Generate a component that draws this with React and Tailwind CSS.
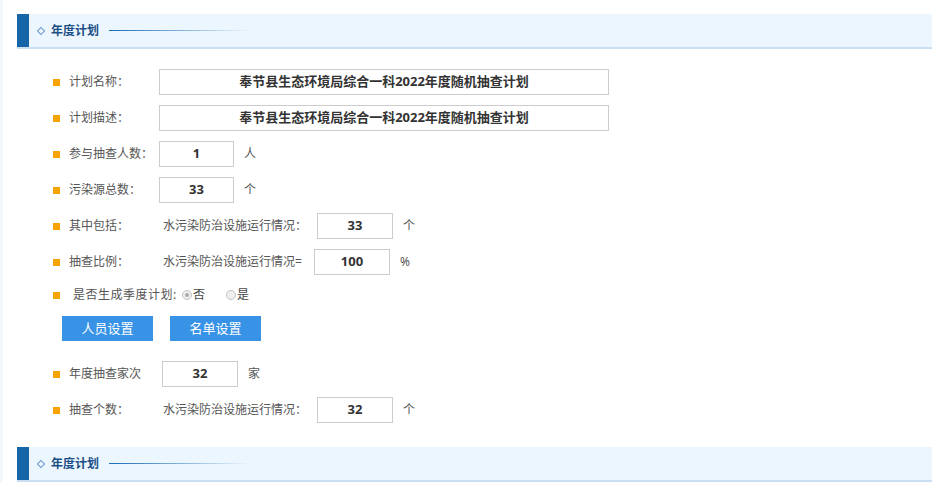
import React from 'react';

const font = { fontFamily: '"Noto Sans", "Noto Sans CJK SC", sans-serif' };

const SectionHeader = () => (
  <div className="flex h-[35px] bg-[#ebf6fe] border-b-2 border-[#cadff2]">
    <div className="w-[12px] bg-[#1565a8]" />
    <div className="flex items-center pl-[9px]">
      <span className="w-[6px] h-[6px] rotate-45 border border-[#6d9ccc] mr-[7px]" />
      <span className="text-[12px] font-bold text-[#1b4f86]">年度计划</span>
      <span className="ml-[10px] w-[140px] h-px bg-gradient-to-r from-[#1a6bb3] to-transparent" />
    </div>
  </div>
);

const Bullet = () => <span className="w-[7px] h-[7px] bg-[#f7a300] mr-[9px] shrink-0" />;

const Box = ({ w, children }) => (
  <div className={`${w} h-[26px] border border-[#cccccc] flex items-center justify-center text-[13px] font-bold text-[#333]`}>
    {children}
  </div>
);

const Row = ({ label, labelW = 'w-[90px]', children, h = 'h-[36px]' }) => (
  <div className={`flex items-center ${h}`}>
    <Bullet />
    <span className={`${labelW} text-[12px] text-[#555] whitespace-nowrap`}>{label}</span>
    {children}
  </div>
);

const Unit = ({ children }) => <span className="ml-[10px] text-[12px] text-[#555]">{children}</span>;

const Sub = ({ children, w = 'w-[154px]' }) => (
  <span className={`${w} text-[12px] text-[#555] whitespace-nowrap`}>{children}</span>
);

const Radio = ({ checked, label }) => (
  <span className="flex items-center">
    <span className="w-[10px] h-[10px] rounded-full border border-[#c4c4c4] bg-[#efefef] flex items-center justify-center">
      {checked && <span className="w-[4px] h-[4px] rounded-full bg-[#a9a9a9]" />}
    </span>
    <span className="ml-px text-[12px] text-[#444]">{label}</span>
  </span>
);

export default function App() {
  return (
    <div className="w-[937px] h-[483px] bg-white flex overflow-hidden" style={font}>
      <div className="w-[3px] bg-[#f2f8fe]" />
      <div className="w-[929px] pl-[14px] pt-[14px]">
        <SectionHeader />

        <div className="pl-[36px] pt-[15px]">
          <Row label="计划名称：">
            <Box w="w-[450px]">奉节县生态环境局综合一科2022年度随机抽查计划</Box>
          </Row>
          <Row label="计划描述：">
            <Box w="w-[450px]">奉节县生态环境局综合一科2022年度随机抽查计划</Box>
          </Row>
          <Row label="参与抽查人数：">
            <Box w="w-[75px]">1</Box>
            <Unit>人</Unit>
          </Row>
          <Row label="污染源总数：">
            <Box w="w-[75px]">33</Box>
            <Unit>个</Unit>
          </Row>
          <Row label="其中包括：" labelW="w-[94px]">
            <Sub>水污染防治设施运行情况：</Sub>
            <Box w="w-[76px]">33</Box>
            <Unit>个</Unit>
          </Row>
          <Row label="抽查比例：" labelW="w-[94px]">
            <Sub w="w-[151px]">水污染防治设施运行情况=</Sub>
            <Box w="w-[76px]">100</Box>
            <Unit>%</Unit>
          </Row>
          <Row label="是否生成季度计划:" labelW="w-[113px] pl-[4px] tracking-[0.5px]" h="h-[30px]">
            <div className="flex items-center gap-[21px]">
              <Radio checked label="否" />
              <Radio label="是" />
            </div>
          </Row>

          <div className="flex gap-[17px] pl-[9px] mt-[6px] mb-[15px]">
            <button className="w-[91px] h-[25px] bg-[#3892e6] text-white text-[13px]">人员设置</button>
            <button className="w-[91px] h-[25px] bg-[#3892e6] text-white text-[13px]">名单设置</button>
          </div>

          <Row label="年度抽查家次" labelW="w-[93px]">
            <Box w="w-[76px]">32</Box>
            <Unit>家</Unit>
          </Row>
          <Row label="抽查个数：" labelW="w-[94px]">
            <Sub>水污染防治设施运行情况：</Sub>
            <Box w="w-[76px]">32</Box>
            <Unit>个</Unit>
          </Row>
        </div>

        <div className="mt-[19px]">
          <SectionHeader />
        </div>
      </div>
    </div>
  );
}
